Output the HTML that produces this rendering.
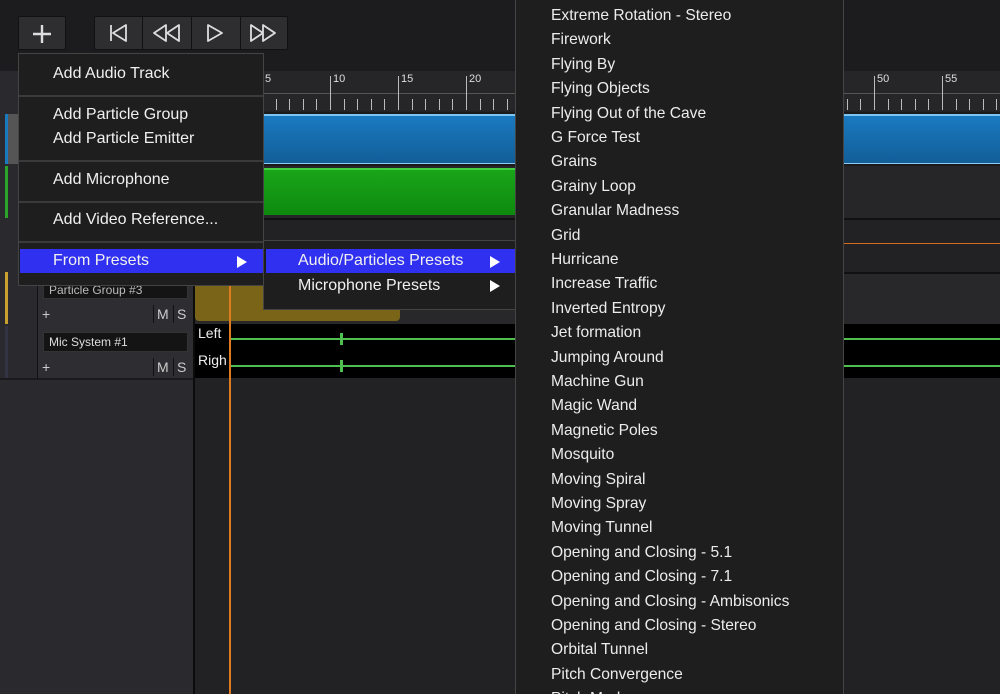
<!DOCTYPE html>
<html style="width:1000px;height:694px;overflow:hidden"><head><meta charset="utf-8"><style>
*{margin:0;padding:0;box-sizing:border-box}
body{width:1000px;height:694px;overflow:hidden;background:#222224;font-family:"Liberation Sans",sans-serif;position:relative;color:#eee}
.a{position:absolute}
.btn{position:absolute;top:16px;height:34px;background:#2e2e30;border:1px solid #111;border-radius:2px}
.mi{position:absolute;left:0;font-size:16px;color:#f0f0f0;white-space:nowrap}
.li{position:absolute;left:35px;font-size:15.6px;color:#ececec;white-space:nowrap;line-height:20px}
.sep{position:absolute;left:0;right:0;height:2px;background:#3a3a3c}
.tk{position:absolute;width:1px;background:#bbb}
.num{position:absolute;top:73px;font-size:11px;color:#ddd}
</style></head><body>
<div class="a" style="left:0;top:0;width:1000px;height:71px;background:#1c1c1e"></div>
<div class="btn" style="left:18px;width:48px"></div>
<svg class="a" style="left:30px;top:22px" width="24" height="24"><path d="M12 3V21M3 12H21" stroke="#ddd" stroke-width="2.4"/></svg>
<div class="btn" style="left:94px;width:194px"></div>
<div class="a" style="left:142px;top:16px;width:1px;height:34px;background:#111"></div>
<div class="a" style="left:191px;top:16px;width:1px;height:34px;background:#111"></div>
<div class="a" style="left:240px;top:16px;width:1px;height:34px;background:#111"></div>
<svg class="a" style="left:94px;top:16px" width="194" height="34" fill="none" stroke="#ddd" stroke-width="1.8" stroke-linejoin="round">
<path d="M17 9V25M32 9L19 17L32 25Z"/>
<path d="M72 9L60 17L72 25ZM85 9L73 17L85 25Z"/>
<path d="M114 9L128 17L114 25Z"/>
<path d="M157 9L169 17L157 25ZM169 9L181 17L169 25Z"/>
</svg>
<div class="a" style="left:0;top:71px;width:193px;height:623px;background:#2a2a2e"></div>
<div class="a" style="left:193px;top:71px;width:2px;height:623px;background:#0c0c0c"></div>
<div class="a" style="left:195px;top:71px;width:805px;height:40px;background:#262628"></div>
<div class="a" style="left:195px;top:93px;width:805px;height:1px;background:#555"></div>
<div id="ruler"></div>
<div class="a" style="left:195px;top:112px;width:805px;height:54px;background:#1a1a1a"></div>
<div class="a" style="left:195px;top:114px;width:805px;height:50px;background:linear-gradient(#1a7ac0,#125e98);border-top:2px solid #7cc4f2;border-bottom:1px solid #8ccaf0"></div>
<div class="a" style="left:195px;top:166px;width:805px;height:52px;background:#262628"></div>
<div class="a" style="left:195px;top:168px;width:320px;height:47px;background:linear-gradient(#1aa51a,#0e8a0e);border-top:2px solid #40d040"></div>
<div class="a" style="left:195px;top:218px;width:805px;height:2px;background:#111"></div>
<div class="a" style="left:195px;top:220px;width:805px;height:52px;background:#222224"></div>
<div class="a" style="left:195px;top:243px;width:805px;height:1px;background:#d26a20"></div>
<div class="a" style="left:195px;top:272px;width:805px;height:2px;background:#111"></div>
<div class="a" style="left:195px;top:274px;width:805px;height:50px;background:#28282a"></div>
<div class="a" style="left:195px;top:284px;width:205px;height:37px;background:#7a6418;border-radius:0 0 4px 4px"></div>
<div class="a" style="left:195px;top:324px;width:805px;height:54px;background:#000"></div>
<div class="a" style="left:230px;top:338px;width:770px;height:2px;background:#4fbf4f"></div>
<div class="a" style="left:230px;top:365px;width:770px;height:2px;background:#4fbf4f"></div>
<div class="a" style="left:340px;top:333px;width:3px;height:12px;background:#4fbf4f"></div>
<div class="a" style="left:340px;top:360px;width:3px;height:12px;background:#4fbf4f"></div>
<div class="a" style="left:198px;top:325px;font-size:14px;color:#eee">Left</div>
<div class="a" style="left:198px;top:352px;font-size:14px;color:#eee">Righ</div>
<div class="a" style="left:229px;top:260px;width:2px;height:434px;background:#e07a20"></div>
<div class="a" style="left:5px;top:114px;width:3px;height:50px;background:#1a7ac0"></div>
<div class="a" style="left:8px;top:114px;width:30px;height:50px;background:#555"></div>
<div class="a" style="left:5px;top:166px;width:3px;height:52px;background:#2aa52a"></div>
<div class="a" style="left:5px;top:272px;width:3px;height:52px;background:#c8a030"></div>
<div class="a" style="left:5px;top:326px;width:3px;height:52px;background:#334"></div>
<div class="a" style="left:37px;top:272px;width:156px;height:106px;background:#2e2e32;border-left:1px solid #111"></div>
<div class="a" style="left:43px;top:281px;width:145px;height:18px;background:#141414;border:1px solid #333;font-size:12px;color:#bbb;padding-left:5px;line-height:16px">Particle Group #3</div>
<div class="a" style="left:43px;top:332px;width:145px;height:20px;background:#141414;border:1px solid #333;font-size:12px;color:#ddd;padding-left:5px;line-height:18px">Mic System #1</div>
<div class="a" style="left:37px;top:305px;width:156px;height:18px;font-size:14px;color:#ccc;line-height:18px"><span style="margin-left:5px">+</span><span style="position:absolute;left:116px;border-left:1px solid #111;padding:0 3px">M</span><span style="position:absolute;left:136px;border-left:1px solid #111;padding:0 3px">S</span></div>
<div class="a" style="left:37px;top:358px;width:156px;height:18px;font-size:14px;color:#ccc;line-height:18px"><span style="margin-left:5px">+</span><span style="position:absolute;left:116px;border-left:1px solid #111;padding:0 3px">M</span><span style="position:absolute;left:136px;border-left:1px solid #111;padding:0 3px">S</span></div>
<div class="a" style="left:0;top:378px;width:193px;height:2px;background:#1a1a1a"></div>
<div class="a" style="left:18px;top:53px;width:246px;height:233px;background:#1e1e1f;border:1px solid #444">
<div class="mi" style="left:34px;top:11px">Add Audio Track</div>
<div class="sep" style="top:41px"></div>
<div class="mi" style="left:34px;top:52px">Add Particle Group</div>
<div class="mi" style="left:34px;top:76px">Add Particle Emitter</div>
<div class="sep" style="top:106px"></div>
<div class="mi" style="left:34px;top:117px">Add Microphone</div>
<div class="sep" style="top:147px"></div>
<div class="mi" style="left:34px;top:157px">Add Video Reference...</div>
<div class="sep" style="top:187px"></div>
<div class="a" style="left:1px;top:195px;width:243px;height:24px;background:#3030f0"></div>
<div class="mi" style="left:34px;top:198px">From Presets</div>
<svg class="a" style="left:217px;top:201px" width="12" height="14"><path d="M1 1L11 7L1 13Z" fill="#fff"/></svg>
</div>
<div class="a" style="left:263px;top:240px;width:253px;height:70px;background:#1e1e1f;border:1px solid #444">
<div class="a" style="left:2px;top:8px;width:250px;height:24px;background:#3030f0"></div>
<div class="mi" style="left:34px;top:11px">Audio/Particles Presets</div>
<svg class="a" style="left:225px;top:14px" width="12" height="14"><path d="M1 1L11 7L1 13Z" fill="#fff"/></svg>
<div class="mi" style="left:34px;top:36px">Microphone Presets</div>
<svg class="a" style="left:225px;top:38px" width="12" height="14"><path d="M1 1L11 7L1 13Z" fill="#fff"/></svg>
</div>
<div class="a" style="left:515px;top:-2px;width:329px;height:696px;background:#1e1e1f;border:1px solid #444;border-bottom:none;overflow:hidden" id="list"></div>
<script>
var r=document.getElementById('ruler'),h='';
for(var i=0;i<60;i++){var x=262+i*13.6; if(x<195||x>1000)continue;
 var maj=(i%5==0);
 h+='<div class="tk" style="left:'+Math.round(x)+'px;top:'+(maj?76:99)+'px;height:'+(maj?34:11)+'px"></div>';
 if(maj)h+='<div class="num" style="left:'+(Math.round(x)+3)+'px">'+(5+i)+'</div>';}
r.innerHTML=h;
var items=["Extreme Rotation - Stereo","Firework","Flying By","Flying Objects","Flying Out of the Cave","G Force Test","Grains","Grainy Loop","Granular Madness","Grid","Hurricane","Increase Traffic","Inverted Entropy","Jet formation","Jumping Around","Machine Gun","Magic Wand","Magnetic Poles","Mosquito","Moving Spiral","Moving Spray","Moving Tunnel","Opening and Closing - 5.1","Opening and Closing - 7.1","Opening and Closing - Ambisonics","Opening and Closing - Stereo","Orbital Tunnel","Pitch Convergence","Pitch Mod"];
var L=document.getElementById('list'),s='';
items.forEach(function(t,i){s+='<div class="li" style="top:'+(7+i*24.4)+'px">'+t+'</div>';});
L.innerHTML=s;
</script>
</body></html>
